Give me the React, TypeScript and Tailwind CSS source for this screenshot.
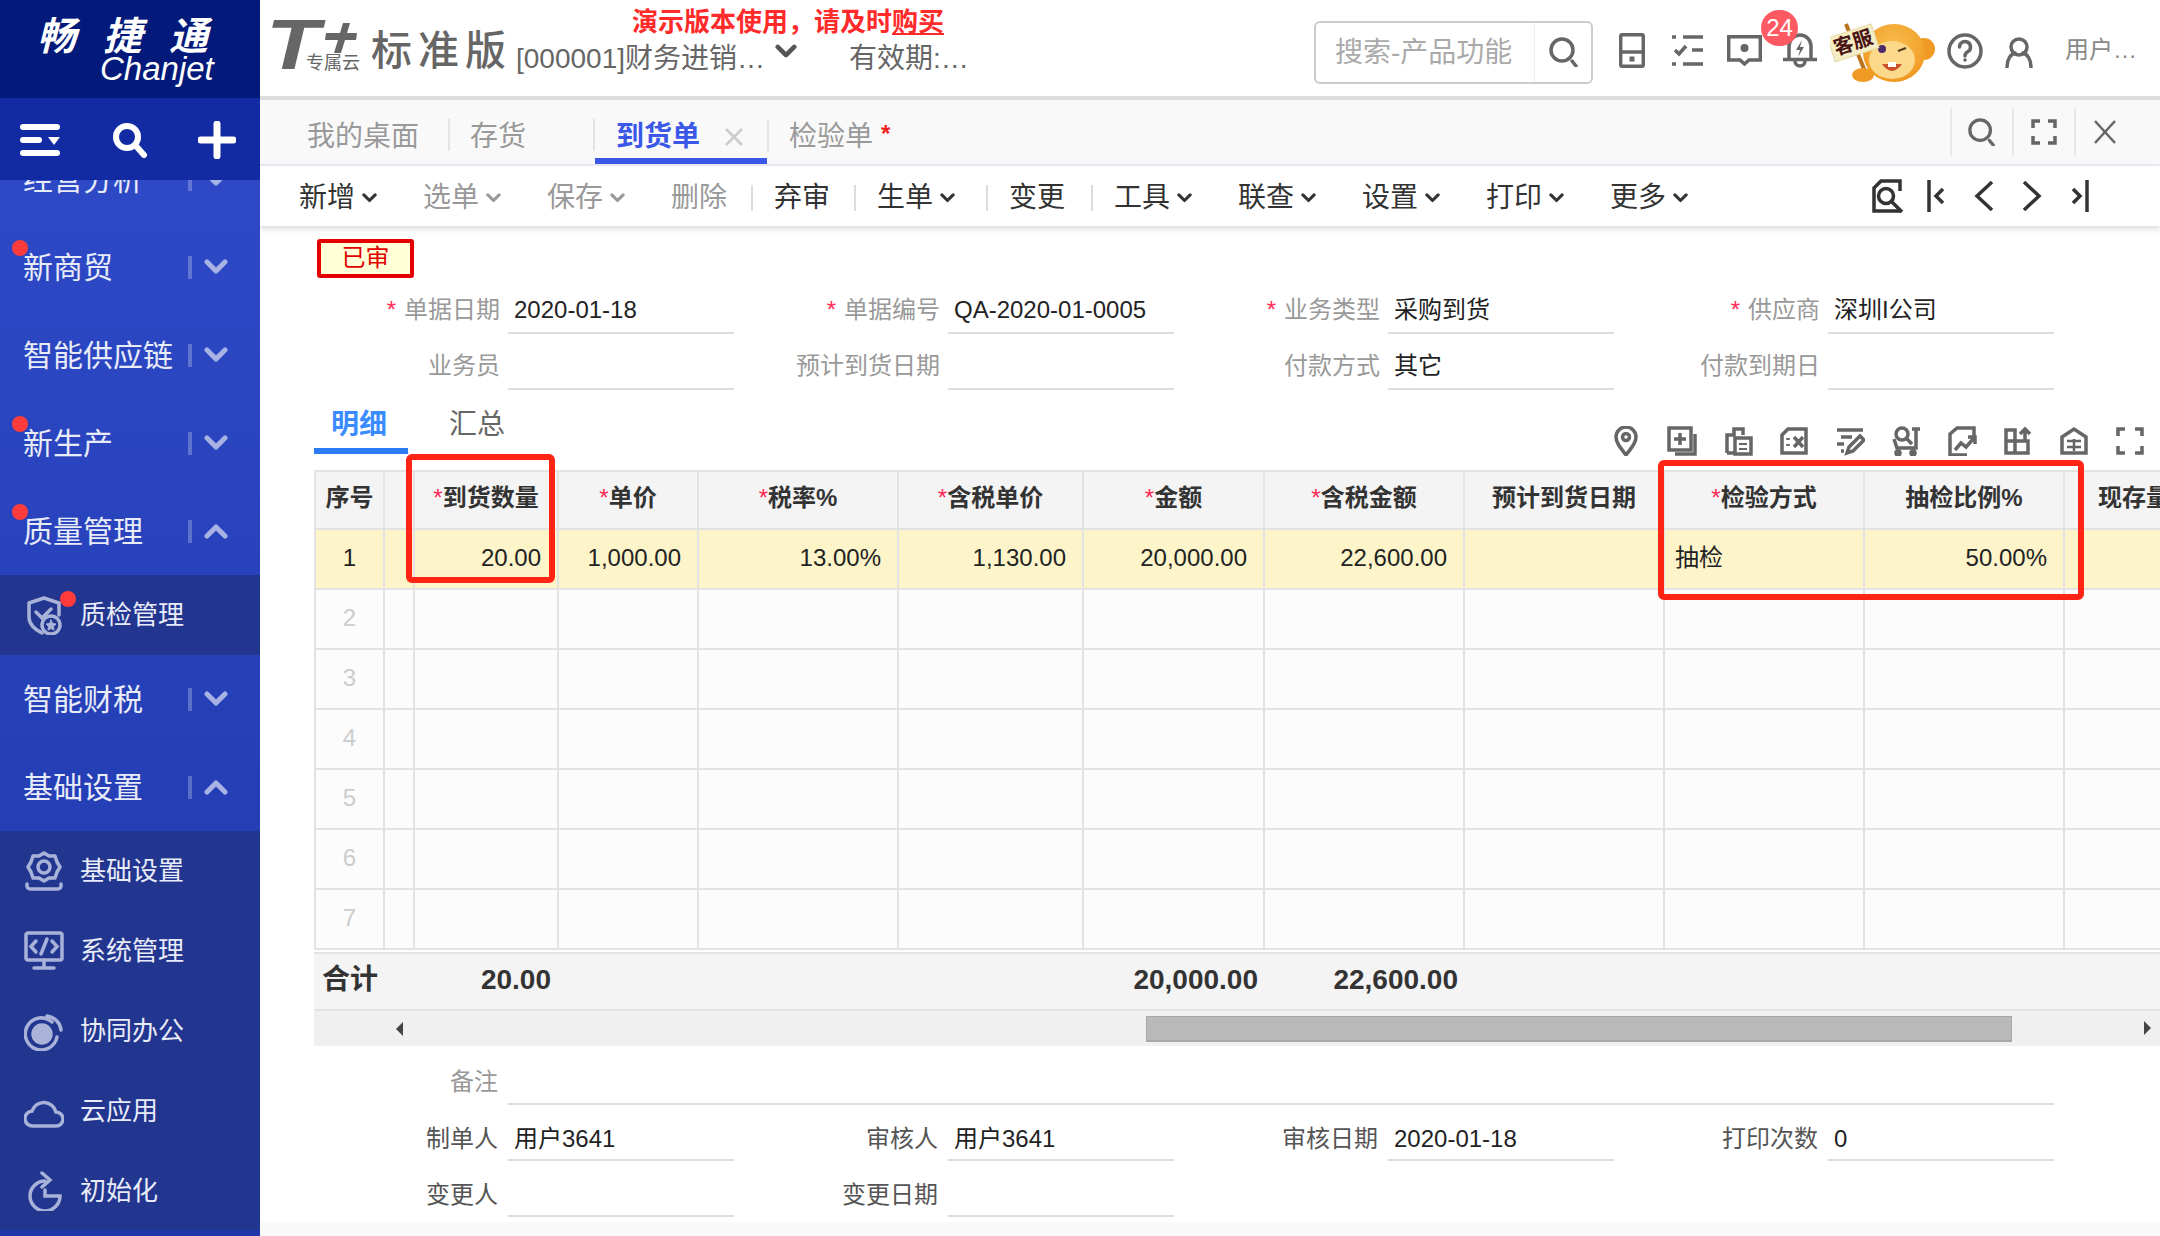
import type { ReactNode } from "react";

const Chev = ({ up = false, className = "" }: { up?: boolean; className?: string }) => (
  <svg viewBox="0 0 24 16" className={className} fill="none" stroke="currentColor" strokeWidth="5" strokeLinecap="round" strokeLinejoin="round">
    <polyline points={up ? "3,13 12,4 21,13" : "3,3 12,12 21,3"} />
  </svg>
);

const SearchGlyph = ({ className = "" }: { className?: string }) => (
  <svg viewBox="0 0 30 30" className={className} fill="none" stroke="currentColor" strokeWidth="3.5" strokeLinecap="round">
    <circle cx="13" cy="13" r="11" />
    <line x1="23" y1="24" x2="27" y2="29" />
  </svg>
);

const subIcons: Record<string, ReactNode> = {
  shield: (
    <>
      <path d="M20 3 L35 8 V20 M5 8 L20 3 M5 8 V22 C5 30 12 35 18 38" />
      <polyline points="12,17 18,23 27,14" />
      <circle cx="27" cy="30" r="9" />
      <polygon points="27,25 28.5,28.5 32,29 29.5,31.5 30,35 27,33.5 24,35 24.5,31.5 22,29 25.5,28.5" fill="currentColor" strokeWidth="1" />
    </>
  ),
  gear: (
    <>
      <polygon points="20,2 25,5 31,5 33,11 36,16 33,21 31,27 25,27 20,30 15,27 9,27 7,21 4,16 7,11 9,5 15,5" strokeLinejoin="round" />
      <circle cx="20" cy="16" r="6" />
      <path d="M3 33 v2 a3 3 0 0 0 3 3 h28 a3 3 0 0 0 3 -3 v-2" />
    </>
  ),
  monitor: (
    <>
      <rect x="2" y="2" width="36" height="27" rx="2" />
      <polyline points="12,10 7,15.5 12,21" />
      <polyline points="28,10 33,15.5 28,21" />
      <line x1="23" y1="8" x2="17" y2="23" />
      <line x1="20" y1="29" x2="20" y2="36" />
      <line x1="10" y1="37" x2="30" y2="37" />
    </>
  ),
  sync: (
    <>
      <path d="M28 11 A16 16 0 1 0 33 26" />
      <circle cx="18" cy="23" r="9" fill="currentColor" />
      <path d="M23 5 A16 16 0 0 1 37 19" />
    </>
  ),
  cloud: <path d="M9 35 a7.5 7.5 0 0 1 -1 -15 a12.5 12.5 0 0 1 24 1 a7 7 0 0 1 0 14 z" />,
  reset: (
    <>
      <path d="M21 10 a15 15 0 1 0 15 15 h-15 v-6" />
      <polyline points="18,2 26,9 18,16" />
    </>
  ),
};

const SubIcon = ({ name }: { name: string }) => (
  <svg viewBox="0 0 40 40" className="w-[40px] h-[40px] text-[#a9b3d9]" fill="none" stroke="currentColor" strokeWidth="3.5" strokeLinecap="round">
    {subIcons[name]}
  </svg>
);

const Dot = ({ className }: { className: string }) => (
  <span className={`absolute w-[16px] h-[16px] rounded-full bg-[#ff3b3b] ${className}`} />
);

const NavGroup = ({ label, dot, open }: { label: string; dot?: boolean; open?: boolean }) => (
  <div className="relative h-[88px] shrink-0 flex items-center pl-[23px] text-[30px] text-[#e8ebf8]">
    {dot && <Dot className="left-[12px] top-[17px]" />}
    <span>{label}</span>
    <span className="absolute left-[188px] top-[33px] w-[4px] h-[23px] bg-white/25" />
    <Chev up={open} className="absolute left-[204px] top-[36px] w-[24px] h-[16px] text-[#a9b3e3]" />
  </div>
);

const NavSub = ({ label, icon, dot }: { label: string; icon: string; dot?: boolean }) => (
  <div className="relative h-[80px] shrink-0 flex items-center pl-[24px] gap-[16px] text-[26px] text-[#e8ebf8]">
    <SubIcon name={icon} />
    {dot && <Dot className="left-[60px] top-[16px]" />}
    <span>{label}</span>
  </div>
);

const Sidebar = () => (
  <aside className="w-[260px] shrink-0 h-full flex flex-col bg-[#2039ab] overflow-hidden">
    <div className="h-[98px] shrink-0 bg-[#031a7a] text-white flex flex-col items-start pl-[37px] italic">
      <div className="text-[39px] leading-[40px] font-bold tracking-[27px] mt-[17px] whitespace-nowrap">畅捷通</div>
      <div className="text-[33px] leading-[32px] font-medium ml-[63px] -mt-[4px]">Chanjet</div>
    </div>
    <div className="h-[82px] shrink-0 bg-[#122ba3] relative z-10 flex items-center pt-[2px]">
      <svg viewBox="0 0 40 32" className="ml-[20px] w-[40px] h-[32px] text-white" fill="currentColor">
        <rect x="0" y="0" width="40" height="6" rx="3" />
        <rect x="0" y="13" width="22" height="6" rx="3" />
        <polygon points="28,13 40,13 34,21" />
        <rect x="0" y="26" width="40" height="6" rx="3" />
      </svg>
      <svg viewBox="0 0 36 36" className="ml-[52px] w-[36px] h-[36px] text-white" fill="none" stroke="currentColor" strokeWidth="6" strokeLinecap="round">
        <circle cx="15" cy="15" r="11" />
        <line x1="24" y1="24" x2="32" y2="33" />
      </svg>
      <svg viewBox="0 0 38 38" className="ml-[50px] w-[38px] h-[38px] text-white" fill="none" stroke="currentColor" strokeWidth="7" strokeLinecap="round">
        <line x1="19" y1="3" x2="19" y2="35" />
        <line x1="3" y1="19" x2="35" y2="19" />
      </svg>
    </div>
    <div className="flex-1 min-h-0 flex flex-col overflow-hidden bg-linear-to-b from-[#2d49c6] to-[#1f37aa]">
      <div className="-mt-[45px]">
        <NavGroup label="经营分析" />
      </div>
      <NavGroup label="新商贸" dot />
      <NavGroup label="智能供应链" />
      <NavGroup label="新生产" dot />
      <NavGroup label="质量管理" dot open />
      <div className="bg-[#22358f]">
        <NavSub label="质检管理" icon="shield" dot />
      </div>
      <NavGroup label="智能财税" />
      <NavGroup label="基础设置" open />
      <div className="bg-[#22358f] h-[399px] shrink-0">
        <NavSub label="基础设置" icon="gear" />
        <NavSub label="系统管理" icon="monitor" />
        <NavSub label="协同办公" icon="sync" />
        <NavSub label="云应用" icon="cloud" />
        <NavSub label="初始化" icon="reset" />
      </div>
    </div>
  </aside>
);

const Monkey = () => (
  <svg viewBox="0 0 105 62" className="absolute left-[237px] top-[22px] w-[105px] h-[62px]">
    <defs>
      <radialGradient id="fur" cx="50%" cy="35%" r="70%">
        <stop offset="0%" stopColor="#f9bd4e" />
        <stop offset="100%" stopColor="#ee961e" />
      </radialGradient>
    </defs>
    <line x1="16" y1="2" x2="36" y2="52" stroke="#b8741f" strokeWidth="4" />
    <circle cx="94" cy="27" r="11" fill="#ee9a24" />
    <ellipse cx="64" cy="31" rx="31" ry="29" fill="url(#fur)" />
    <ellipse cx="62" cy="38" rx="23" ry="19" fill="#fcd98a" />
    <circle cx="52" cy="27" r="4" fill="#4a2a6a" />
    <path d="M68 29 l8 -3" stroke="#5a3a1a" strokeWidth="2" fill="none" />
    <path d="M52 42 q10 14 20 0 z" fill="#c9502a" />
    <rect x="58" y="40" width="8" height="5" fill="#fff" />
    <ellipse cx="33" cy="53" rx="11" ry="7" fill="#ee9a24" />
    <g transform="rotate(-18 24 20)">
      <rect x="0" y="8" width="46" height="25" fill="#f5edc4" stroke="#e4d9a6" />
      <text x="23" y="27" fontSize="20" fontWeight="700" fill="#4a1414" textAnchor="middle">客服</text>
    </g>
  </svg>
);

const TopBar = () => (
  <header className="relative h-[96px] shrink-0 bg-white flex items-center">
    <div className="relative w-[104px] h-[96px] ml-[6px] text-[#666]">
      <span className="absolute left-0 top-[5px] origin-left scale-x-[1.25] text-[70px] leading-[80px] font-bold italic">T</span>
      <svg viewBox="0 0 34 30" className="absolute left-[57px] top-[23px] w-[34px] h-[30px]" fill="currentColor">
        <polygon points="20,0 27,0 24,10 34,10 33,17 22,17 18,30 11,30 15,17 2,17 3,10 17,10" />
      </svg>
      <span className="absolute left-[40px] top-[53px] text-[18px] leading-[20px] whitespace-nowrap">专属云</span>
    </div>
    <span className="ml-[1px] text-[41px] tracking-[6px] font-medium text-[#666] whitespace-nowrap mt-[8px]">标准版</span>
    <span className="ml-[4px] text-[28px] text-[#666] whitespace-nowrap mt-[22px]">[000001]财务进销…</span>
    <Chev className="ml-[10px] w-[22px] h-[15px] text-[#555] mt-[6px]" />
    <span className="ml-[52px] text-[28px] text-[#666] whitespace-nowrap mt-[22px]">有效期:…</span>
    <span className="absolute left-[372px] top-[5px] text-[26px] leading-[34px] font-bold text-[#ff2a2a] whitespace-nowrap">
      演示版本使用，请及时<span className="underline">购买</span>
    </span>

    <div className="ml-auto w-[279px] h-[63px] mt-[8px] border-2 border-[#ccc] rounded-[6px] flex items-center">
      <span className="w-[219px] pl-[19px] text-[28px] text-[#aaa] whitespace-nowrap border-r border-[#eee] leading-[59px]">搜索-产品功能</span>
      <SearchGlyph className="ml-[14px] w-[30px] h-[30px] text-[#666]" />
    </div>

    <div className="relative w-[567px] h-[96px] text-[#666]">
      <svg viewBox="0 0 26 35" className="absolute left-[26px] top-[33px] w-[26px] h-[35px]" fill="none" stroke="currentColor" strokeWidth="3.5">
        <rect x="1.7" y="1.7" width="22.6" height="31.6" rx="1.5" />
        <line x1="1.5" y1="19" x2="24.5" y2="19" />
        <rect x="11" y="24" width="4" height="4" fill="currentColor" strokeWidth="1" />
      </svg>
      <svg viewBox="0 0 31 31" className="absolute left-[79px] top-[35px] w-[31px] h-[31px]" fill="none" stroke="currentColor" strokeWidth="3.5">
        <line x1="0" y1="2" x2="4" y2="2" />
        <line x1="11" y1="2" x2="31" y2="2" />
        <polyline points="3,15 7,19 14,11" />
        <line x1="20" y1="15" x2="31" y2="15" />
        <line x1="0" y1="29" x2="4" y2="29" />
        <line x1="11" y1="29" x2="31" y2="29" />
      </svg>
      <svg viewBox="0 0 35 31" className="absolute left-[134px] top-[35px] w-[35px] h-[31px]" fill="none" stroke="currentColor" strokeWidth="3.5">
        <path d="M1.7 1.7 H33.3 V25 H22 L17.5 29 L13 25 H1.7 Z" />
        <circle cx="17.5" cy="13" r="4" fill="currentColor" strokeWidth="0" />
      </svg>
      <svg viewBox="0 0 34 36" className="absolute left-[190px] top-[32px] w-[34px] h-[36px]" fill="none" stroke="currentColor" strokeWidth="3.5">
        <path d="M6 27 V14 a11 11 0 0 1 22 0 V27" />
        <line x1="0" y1="27.5" x2="34" y2="27.5" />
        <path d="M12 29 a5 5 0 0 0 10 0" />
        <polygon points="19,8 13,18 17,18 15,25 21,15 17,15" fill="currentColor" strokeWidth="0" />
      </svg>
      <span className="absolute left-[168px] top-[10px] w-[37px] h-[36px] rounded-full bg-[#ff5a63] text-white text-[24px] leading-[36px] text-center">24</span>

      <Monkey />

      <svg viewBox="0 0 36 36" className="absolute left-[354px] top-[33px] w-[36px] h-[36px]" fill="none" stroke="currentColor" strokeWidth="3.5">
        <circle cx="18" cy="18" r="16" />
        <path d="M12.5 14 a5.5 5.5 0 1 1 8.5 4.6 c-2 1.2 -3 2.2 -3 4.4" strokeLinecap="round" />
        <circle cx="18" cy="27" r="1.8" fill="currentColor" strokeWidth="0" />
      </svg>
      <svg viewBox="0 0 28 31" className="absolute left-[412px] top-[37px] w-[28px] h-[31px]" fill="none" stroke="currentColor" strokeWidth="3.5" strokeLinecap="round">
        <circle cx="14" cy="10" r="8" />
        <path d="M2 30 c0 -8 4 -13 8 -14 M26 30 c0 -8 -4 -13 -8 -14" />
      </svg>
      <span className="absolute left-[472px] top-[35px] text-[24px] leading-[30px] text-[#888] whitespace-nowrap">用户…</span>
    </div>
  </header>
);

const TabsBar = () => (
  <div className="h-[70px] shrink-0 border-t-4 border-b-2 border-t-[#ddd] border-b-[#e8e9f2] bg-[#f9f9fa] flex items-stretch text-[28px] text-[#999] pl-[47px]">
    <div className="flex items-center pt-[9px]">我的桌面</div>
    <div className="w-[2px] h-[32px] self-center bg-[#e4e4e8] ml-[29px] mt-[6px]" />
    <div className="flex items-center ml-[20px] pt-[9px]">存货</div>
    <div className="w-[2px] h-[32px] self-center bg-[#e4e4e8] ml-[67px] mt-[6px]" />
    <div className="relative w-[172px] flex items-center pl-[21px] pt-[9px] font-bold text-[#3a57e8]">
      到货单
      <svg viewBox="0 0 20 20" className="ml-[24px] w-[20px] h-[20px] text-[#ccc]" fill="none" stroke="currentColor" strokeWidth="2.5">
        <line x1="2" y1="2" x2="18" y2="18" />
        <line x1="18" y1="2" x2="2" y2="18" />
      </svg>
      <span className="absolute left-0 right-0 bottom-0 h-[6px] bg-[#3a57e8]" />
    </div>
    <div className="w-[2px] h-[32px] self-center bg-[#e4e4e8] mt-[6px]" />
    <div className="flex items-center ml-[20px] pt-[9px]">检验单<span className="ml-[8px] text-[#f02020] text-[24px] font-bold -mt-[6px]">*</span></div>

    <div className="ml-auto flex items-center pr-[26px] text-[#666]">
      <div className="w-[62px] h-[48px] border-l-2 border-[#e8e8ec] flex items-center justify-center">
        <SearchGlyph className="w-[28px] h-[28px]" />
      </div>
      <div className="w-[62px] h-[48px] border-l-2 border-[#e8e8ec] flex items-center justify-center">
        <svg viewBox="0 0 26 26" className="w-[26px] h-[26px]" fill="none" stroke="currentColor" strokeWidth="3.5">
          <path d="M9 2 H2 V9 M17 2 H24 V9 M2 17 V24 H9 M24 17 V24 H17" />
        </svg>
      </div>
      <div className="w-[60px] h-[48px] border-l-2 border-[#e8e8ec] flex items-center justify-center">
        <svg viewBox="0 0 24 24" className="w-[24px] h-[24px]" fill="none" stroke="currentColor" strokeWidth="2.5">
          <line x1="2" y1="1" x2="22" y2="23" />
          <line x1="22" y1="1" x2="2" y2="23" />
        </svg>
      </div>
    </div>
  </div>
);

const actions = [
  { label: "新增", drop: true, w: "w-[124px]" },
  { label: "选单", drop: true, off: true, w: "w-[124px]" },
  { label: "保存", drop: true, off: true, w: "w-[124px]" },
  { label: "删除", off: true, w: "w-[80px]", sep: true },
  { label: "弃审", w: "w-[80px]", sep: true },
  { label: "生单", drop: true, w: "w-[109px]", sep: true },
  { label: "变更", w: "w-[82px]", sep: true },
  { label: "工具", drop: true, w: "w-[124px]" },
  { label: "联查", drop: true, w: "w-[124px]" },
  { label: "设置", drop: true, w: "w-[124px]" },
  { label: "打印", drop: true, w: "w-[124px]" },
  { label: "更多", drop: true, w: "w-[124px]" },
];

const ActionBar = () => (
  <div className="relative z-10 h-[60px] shrink-0 bg-white shadow-[0_3px_6px_rgba(0,0,0,0.14)] flex items-center pl-[39px] text-[28px]">
    {actions.map((a) => (
      <div key={a.label} className="flex items-center shrink-0 mt-[3px]">
        <div className={`${a.w} flex items-center ${a.off ? "text-[#999]" : "text-[#333]"}`}>
          <span>{a.label}</span>
          {a.drop && <Chev className="ml-[7px] w-[15px] h-[10px]" />}
        </div>
        {a.sep && <span className="w-[2px] h-[26px] bg-[#ddd] mr-[21px]" />}
      </div>
    ))}
    <div className="ml-auto pr-[64px] flex items-center gap-[16px] text-[#333]">
      <svg viewBox="0 0 32 36" className="w-[32px] h-[36px]" fill="none" stroke="currentColor" strokeWidth="3.5">
        <path d="M28 13 V3 H9 L2 10 V33 H28 " />
        <circle cx="14" cy="18" r="7.5" />
        <line x1="20" y1="24" x2="30" y2="34" />
      </svg>
      <svg viewBox="0 0 32 36" className="w-[32px] h-[36px]" fill="none" stroke="currentColor" strokeWidth="3.5">
        <line x1="9" y1="2" x2="9" y2="34" />
        <polyline points="23,11 16,18 23,25" />
      </svg>
      <svg viewBox="0 0 32 36" className="w-[32px] h-[36px]" fill="none" stroke="currentColor" strokeWidth="3.5">
        <polyline points="24,4 9,18 24,32" />
      </svg>
      <svg viewBox="0 0 32 36" className="w-[32px] h-[36px]" fill="none" stroke="currentColor" strokeWidth="3.5">
        <polyline points="8,4 23,18 8,32" />
      </svg>
      <svg viewBox="0 0 32 36" className="w-[32px] h-[36px]" fill="none" stroke="currentColor" strokeWidth="3.5">
        <polyline points="9,11 16,18 9,25" />
        <line x1="23" y1="2" x2="23" y2="34" />
      </svg>
    </div>
  </div>
);

const Field = ({ label, value, req, dim = true }: { label: string; value?: string; req?: boolean; dim?: boolean }) => (
  <div className="flex h-[46px]">
    <div className={`w-[208px] text-right text-[24px] whitespace-nowrap ${dim ? "pr-[8px] leading-[44px] text-[#999]" : "pr-[10px] leading-[47px] text-[#555]"}`}>
      {req && <span className="text-[#ff2a55] mr-[8px]">*</span>}
      {label}
    </div>
    <div className={`w-[226px] border-b-2 border-[#ddd] pl-[6px] text-[24px] text-[#222] whitespace-nowrap ${dim ? "leading-[44px]" : "leading-[47px]"}`}>{value}</div>
  </div>
);

const formGrid = "ml-[40px] grid grid-cols-[repeat(4,434px)] gap-x-[6px] gap-y-[10px]";

const tableIcons: ReactNode[] = [
  <>
    <path d="M15 29 C8 20 5 16 5 11 a10 10 0 0 1 20 0 C25 16 22 20 15 29 Z" />
    <circle cx="15" cy="11" r="3.5" />
  </>,
  <>
    <rect x="2" y="2" width="22" height="22" />
    <path d="M28 8 V28 H8" />
    <path d="M13 7 V19 M7 13 H19" />
  </>,
  <>
    <path d="M4 27 V9 H11 V3 H20 V9 M4 27 H11" />
    <rect x="12" y="12" width="16" height="16" />
    <path d="M16 18 H24 M16 23 H24" strokeWidth="2" />
  </>,
  <>
    <path d="M3 27 V9 L9 3 H27 V27 Z" />
    <path d="M9 12 V14 M9 18 V20" />
    <path d="M15 11 L24 21 M24 11 L15 21" />
  </>,
  <>
    <path d="M2 4 H28 M6 11 H17 M2 18 H9 M6 25 H9" />
    <path d="M12 27 L14 21 L25 10 L29 14 L18 25 Z" />
  </>,
  <>
    <circle cx="11" cy="8" r="6" />
    <path d="M15 12 L21 18 M21 3 H29 M25 3 V22 H6 L3 13" />
    <circle cx="7" cy="27" r="2" fill="currentColor" />
    <circle cx="22" cy="27" r="2" fill="currentColor" />
  </>,
  <>
    <path d="M20 29 H3 V8 L10 2 H27 V14" />
    <path d="M8 24 L14 17 L19 21 L27 12 M21 11 H28 V18" />
  </>,
  <>
    <path d="M3 4 H12 V15 H3 Z M3 15 H25 V27 H3 Z M12 15 V27" />
    <path d="M22 15 V3 M17 8 L22 3 L27 8" />
  </>,
  <>
    <path d="M3 27 V11 L15 3 L27 11 V27 Z" />
    <path d="M8 15 H22 M8 21 H22 M15 13 V25" strokeWidth="2.5" />
  </>,
  <path d="M10 3 H3 V10 M20 3 H27 V10 M3 20 V27 H10 M27 20 V27 H20" />,
];

const cols = "grid grid-cols-[69px_30px_144px_140px_200px_185px_181px_200px_200px_200px_200px_140px]";
const cell = "h-full border-r-2 border-b-2 border-[#e3e3e3] flex items-center pb-[2px]";
const Numeric = ({ v }: { v: string }) => <div className={`${cell} justify-end pr-[16px]`}>{v}</div>;

const headers: [string, boolean][] = [
  ["序号", false],
  ["", false],
  ["到货数量", true],
  ["单价", true],
  ["税率%", true],
  ["含税单价", true],
  ["金额", true],
  ["含税金额", true],
  ["预计到货日期", false],
  ["检验方式", true],
  ["抽检比例%", false],
  ["现存量", false],
];

const Grid = () => (
  <div className="ml-[54px] mt-[16px] border-t-2 border-l-2 border-[#e3e3e3] overflow-hidden">
    <div className={`${cols} h-[58px] bg-[#f4f4f4] text-[24px] font-bold text-[#333]`}>
      {headers.map(([h, req], i) => (
        <div key={i} className={`${cell} justify-center whitespace-nowrap !pb-[4px]`}>
          {req && <span className="text-[#ff2a55] font-normal">*</span>}
          {h}
        </div>
      ))}
    </div>
    <div className={`${cols} h-[60px] bg-[#fdf5c9] text-[24px] text-[#222]`}>
      <div className={`${cell} justify-center`}>1</div>
      <div className={cell} />
      <Numeric v="20.00" />
      <Numeric v="1,000.00" />
      <Numeric v="13.00%" />
      <Numeric v="1,130.00" />
      <Numeric v="20,000.00" />
      <Numeric v="22,600.00" />
      <div className={cell} />
      <div className={`${cell} pl-[10px]`}>抽检</div>
      <Numeric v="50.00%" />
      <div className={cell} />
    </div>
    {[2, 3, 4, 5, 6, 7].map((n) => (
      <div key={n} className={`${cols} h-[60px] bg-[#fcfcfc] text-[24px] text-[#ccc]`}>
        <div className={`${cell} justify-center`}>{n}</div>
        {Array.from({ length: 11 }, (_, i) => (
          <div key={i} className={cell} />
        ))}
      </div>
    ))}
  </div>
);

const Totals = () => (
  <div className="ml-[54px]">
    <div className={`${cols} mt-[2px] h-[59px] bg-[#f4f4f4] border-y-2 border-[#e3e3e3] text-[28px] font-bold text-[#333] overflow-hidden`}>
      <div className="flex items-center pl-[8px] pb-[4px] whitespace-nowrap">合计</div>
      <div />
      <div className="flex items-center justify-end pr-[6px] pb-[4px]">20.00</div>
      <div />
      <div />
      <div />
      <div className="flex items-center justify-end pr-[5px] pb-[4px]">20,000.00</div>
      <div className="flex items-center justify-end pr-[5px] pb-[4px]">22,600.00</div>
    </div>
    <div className="relative h-[35px] bg-[#f0f0f0] flex items-center">
      <span className="ml-[82px] w-0 h-0 border-y-[7px] border-y-transparent border-r-[7px] border-r-[#444]" />
      <div className="absolute left-[832px] top-[5px] w-[866px] h-[26px] bg-[#b9b9b9] border border-[#a8a8a8] border-b-2" />
      <span className="absolute right-[9px] top-[10px] w-0 h-0 border-y-[7px] border-y-transparent border-l-[7px] border-l-[#444]" />
    </div>
  </div>
);

const marks = [
  "left-[680px] top-[130px]",
  "left-[70px] top-[360px]",
  "left-[1320px] top-[360px]",
  "left-[680px] top-[620px]",
  "left-[70px] top-[880px]",
  "left-[680px] top-[880px]",
  "left-[1320px] top-[880px]",
];

const Detail = () => (
  <main className="relative flex-1 min-w-0 h-full flex flex-col bg-white overflow-hidden">
    <TopBar />
    <TabsBar />
    <ActionBar />

    <div className="ml-[57px] mt-[13px] w-[97px] h-[39px] shrink-0 rounded-[3px] border-[4px] border-[#e30000] bg-[#ffffd8] text-[#e30000] text-[24px] leading-[30px] text-center">
      已审
    </div>

    <div className={`${formGrid} mt-[10px]`}>
      <Field label="单据日期" value="2020-01-18" req />
      <Field label="单据编号" value="QA-2020-01-0005" req />
      <Field label="业务类型" value="采购到货" req />
      <Field label="供应商" value="深圳I公司" req />
      <Field label="业务员" />
      <Field label="预计到货日期" />
      <Field label="付款方式" value="其它" />
      <Field label="付款到期日" />
    </div>

    <div className="h-[64px] shrink-0 flex pl-[54px] pr-[15px]">
      <div className="w-[94px] h-full border-b-[6px] border-[#2b7bf5] text-[#3a8bff] text-[28px] font-bold text-center pt-[15px] pr-[4px] leading-[40px]">明细</div>
      <div className="ml-[41px] text-[#666] text-[28px] pt-[15px] leading-[40px]">汇总</div>
      <div className="ml-auto mt-[36px] flex gap-[26px] text-[#666]">
        {tableIcons.map((icon, i) => (
          <svg key={i} viewBox="0 0 30 30" className="w-[30px] h-[30px]" fill="none" stroke="currentColor" strokeWidth="3.5">
            {icon}
          </svg>
        ))}
      </div>
    </div>

    <Grid />
    <Totals />

    <div className={`${formGrid} mt-[13px]`}>
      <div className="col-span-4 flex h-[46px]">
        <div className="w-[208px] pr-[10px] text-right text-[24px] leading-[46px] text-[#999]">备注</div>
        <div className="flex-1 border-b-2 border-[#ddd]" />
      </div>
      <Field label="制单人" value="用户3641" dim={false} />
      <Field label="审核人" value="用户3641" dim={false} />
      <Field label="审核日期" value="2020-01-18" dim={false} />
      <Field label="打印次数" value="0" dim={false} />
      <Field label="变更人" dim={false} />
      <Field label="变更日期" dim={false} />
    </div>
    <div className="mt-auto h-[14px] shrink-0 bg-[#f9f9f9]" />

    {/* red marks drawn on the screenshot */}
    <div className="absolute left-[146px] top-[454px] w-[149px] h-[129px] border-[6px] border-[#ff2414] rounded-[6px] pointer-events-none" />
    <div className="absolute left-[1398px] top-[460px] w-[426px] h-[140px] border-[6px] border-[#ff2414] rounded-[6px] pointer-events-none" />

    {marks.map((m) => (
      <div key={m} className={`absolute ${m} -rotate-[22deg] text-[38px] leading-[46px] text-black/[0.012] text-center whitespace-nowrap pointer-events-none`}>
        <div>用户36413641</div>
        <div className="italic">11091138</div>
      </div>
    ))}
  </main>
);

export default function App() {
  return (
    <div className="w-[2160px] h-[1236px] flex overflow-hidden font-['Liberation_Sans','Noto_Sans_CJK_SC',sans-serif]">
      <Sidebar />
      <Detail />
    </div>
  );
}
